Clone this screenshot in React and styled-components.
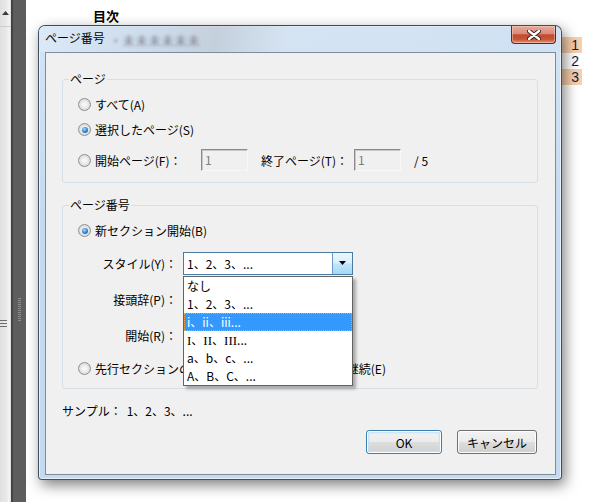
import styled, { createGlobalStyle } from "styled-components";

const GlobalStyle = createGlobalStyle`
  html, body {
    margin: 0;
    padding: 0;
  }
  body {
    width: 593px;
    height: 502px;
    overflow: hidden;
    font-family: "Noto Sans CJK JP", "Noto Sans", sans-serif;
    font-size: 12px;
    color: #000;
  }
`;

const Roman = styled.span`
    font-family: "Liberation Serif", serif;
    font-size: 13px;
`;

const styleOptions = [
    "なし",
    "1、2、3、...",
    "i、ii、iii...",
    <><Roman>I</Roman>、<Roman>II</Roman>、<Roman>III</Roman>...</>,
    "a、b、c、...",
    "A、B、C、...",
];

const Radio = ({ checked, children }) => (
    <RadioRow>
        <RadioDot $checked={checked} />
        <span>{children}</span>
    </RadioRow>
);

const App = () => {
    return (
        <>
            <GlobalStyle />
            <Desktop>
                <Sidebar>
                    <ScrollTrack>
                        <ScrollArrow>
                            <svg width="7" height="4" viewBox="0 0 7 4">
                                <path d="M0 4 L3.5 0 L7 4 Z" fill="#3a3a3a" />
                            </svg>
                        </ScrollArrow>
                        <ScrollThumb>
                            <ThumbGrip />
                        </ScrollThumb>
                    </ScrollTrack>
                    <DarkEdge />
                    <Splitter>
                        <SplitterGrip />
                    </Splitter>
                </Sidebar>

                <Document>
                    <Heading>目次</Heading>
                    <NumberColumn>
                        <NumberCell $marked>1</NumberCell>
                        <NumberCell>2</NumberCell>
                        <NumberCell $marked>3</NumberCell>
                    </NumberColumn>
                </Document>

                <Dialog>
                    <TitleBar>
                        <Title>ページ番号</Title>
                        <Ghost>・未未未未未未</Ghost>
                        <CloseButton>
                            <svg width="14" height="10" viewBox="0 0 14 10">
                                <path d="M2 1 L12 9 M12 1 L2 9" stroke="#3b1a14" strokeWidth="4.2" strokeLinecap="round" />
                                <path d="M2 1 L12 9 M12 1 L2 9" stroke="#ffffff" strokeWidth="2.4" strokeLinecap="round" />
                            </svg>
                        </CloseButton>
                    </TitleBar>

                    <Client>
                        <Group>
                            <Legend>ページ</Legend>
                            <Radio>すべて(A)</Radio>
                            <Radio checked>選択したページ(S)</Radio>
                            <RangeRow>
                                <RadioDot />
                                <RangeLabel $width={106}>開始ページ(F)：</RangeLabel>
                                <DisabledField>1</DisabledField>
                                <RangeLabel $width={93} $gap={13}>終了ページ(T)：</RangeLabel>
                                <DisabledField>1</DisabledField>
                                <PageTotal>/ 5</PageTotal>
                            </RangeRow>
                        </Group>

                        <Group $spaced>
                            <Legend>ページ番号</Legend>
                            <Radio checked>新セクション開始(B)</Radio>
                            <FieldRow $top={8}>
                                <FieldLabel>スタイル(Y)：</FieldLabel>
                                <ComboWrap>
                                    <ComboBox>
                                        <ComboValue>1、2、3、...</ComboValue>
                                        <ComboArrow>
                                            <svg width="7" height="4" viewBox="0 0 7 4">
                                                <path d="M0 0 L7 0 L3.5 4 Z" fill="#000" />
                                            </svg>
                                        </ComboArrow>
                                    </ComboBox>
                                    <OptionList>
                                        {styleOptions.map((opt, i) => (
                                            <OptionItem key={i} $selected={i === 2}>{opt}</OptionItem>
                                        ))}
                                    </OptionList>
                                </ComboWrap>
                            </FieldRow>
                            <FieldRow $top={12}>
                                <FieldLabel>接頭辞(P)：</FieldLabel>
                                <TextField $width={100} />
                            </FieldRow>
                            <FieldRow $top={12}>
                                <FieldLabel>開始(R)：</FieldLabel>
                                <TextField $width={60} />
                            </FieldRow>
                            <FieldRow $top={9}>
                                <Radio>先行セクションの番号付けを選択したページに継続(E)</Radio>
                            </FieldRow>
                        </Group>

                        <SampleRow>
                            <span>サンプル：</span>
                            <SampleValue>1、2、3、...</SampleValue>
                        </SampleRow>

                        <ButtonRow>
                            <Button $default $width={76}>OK</Button>
                            <Button $width={80}>キャンセル</Button>
                        </ButtonRow>
                    </Client>
                </Dialog>
            </Desktop>
        </>
    );
};

const Desktop = styled.div`
    position: relative;
    width: 593px;
    height: 502px;
    display: flex;
    background: #fff;
    overflow: hidden;
`;

const Sidebar = styled.div`
    display: flex;
    width: 26px;
    height: 100%;
    flex: none;
`;

const ScrollTrack = styled.div`
    width: 11px;
    display: flex;
    flex-direction: column;
    background: linear-gradient(90deg, #e0e0e0 0%, #e9e9e9 60%, #f4f4f4 85%, #d6d6d6 100%);
`;

const ScrollArrow = styled.div`
    height: 26px;
    border-bottom: 1px solid #cfcfcf;
    display: flex;
    align-items: center;
    padding-left: 2px;
`;

const ScrollThumb = styled.div`
    flex: 1;
    display: flex;
    flex-direction: column;
`;

const ThumbGrip = styled.div`
    margin-top: 293px;
    width: 7px;
    height: 7px;
    background: repeating-linear-gradient(#6e6e6e 0 1px, transparent 1px 3px);
`;

const DarkEdge = styled.div`
    width: 2px;
    background: #434343;
`;

const Splitter = styled.div`
    width: 13px;
    background: #5d5d5d;
    display: flex;
    justify-content: center;
`;

const SplitterGrip = styled.div`
    margin-top: 298px;
    width: 3px;
    height: 23px;
    background: repeating-linear-gradient(#8d8d8d 0 1px, transparent 1px 2px);
`;

const Document = styled.div`
    flex: 1;
    display: flex;
    justify-content: space-between;
    align-items: flex-start;
`;

const Heading = styled.h1`
    margin: 8px 0 0 67px;
    font-size: 13px;
    line-height: 15px;
    font-weight: 700;
`;

const NumberColumn = styled.div`
    margin: 37px 11px 0 0;
    width: 21px;
    display: flex;
    flex-direction: column;
`;

const NumberCell = styled.div`
    height: 16px;
    line-height: 16px;
    text-align: right;
    padding-right: 3px;
    font-family: "Liberation Sans", sans-serif;
    font-size: 14px;
    color: #0d1b4c;
    background: ${p => (p.$marked ? "#f7cfab" : "transparent")};
`;

const Dialog = styled.div`
    position: absolute;
    left: 38px;
    top: 25px;
    width: 524px;
    height: 455px;
    box-sizing: border-box;
    display: flex;
    flex-direction: column;
    border: 1px solid rgba(38, 52, 70, 0.85);
    border-radius: 7px 7px 4px 4px;
    background: linear-gradient(180deg, #d3e4f5 0%, #c6dbf0 40%, #c4daf1 100%);
    box-shadow: 3px 5px 14px rgba(0, 0, 0, 0.5), inset 0 0 0 1px rgba(255, 255, 255, 0.6);
`;

const TitleBar = styled.div`
    height: 26px;
    display: flex;
    align-items: flex-start;
    padding-left: 6px;
    border-radius: 6px 6px 0 0;
    background: linear-gradient(100deg, rgba(220, 234, 248, 0.9) 0%, rgba(200, 214, 230, 0.6) 22%,
        rgba(186, 192, 200, 0.55) 34%, rgba(214, 228, 243, 0.7) 48%, rgba(205, 223, 242, 0.5) 100%);
`;

const Title = styled.span`
    margin-top: 4px;
    line-height: 16px;
    font-size: 12px;
`;

const Ghost = styled.span`
    margin: 8px 0 0 5px;
    line-height: 14px;
    font-size: 12px;
    letter-spacing: 1px;
    color: #7d7d85;
    filter: blur(1.4px);
`;

const CloseButton = styled.div`
    margin-left: auto;
    margin-right: 5px;
    width: 45px;
    height: 18px;
    box-sizing: border-box;
    display: flex;
    align-items: center;
    justify-content: center;
    border: 1px solid #5c2b22;
    border-top: none;
    border-radius: 0 0 4px 4px;
    background: linear-gradient(180deg, #e8aa9c 0%, #d88b7a 45%, #c24a30 52%, #c85537 78%, #e09475 100%);
    box-shadow: inset 0 0 0 1px rgba(255, 220, 210, 0.45);
`;

const Client = styled.div`
    flex: 1;
    margin: 0 5px 4px 6px;
    border: 1px solid #7d8c9b;
    background: #f0f0f0;
    padding: 19px 17px 0 16px;
    display: flex;
    flex-direction: column;
`;

const Group = styled.fieldset`
    margin: ${p => (p.$spaced ? "15px" : "0")} 0 0;
    padding: 6px 15px 8px;
    min-width: 0;
    border: 1px solid #d5dfe5;
    border-radius: 3px;
`;

const Legend = styled.legend`
    margin-left: -9px;
    padding: 0 1px;
    font-size: 12px;
    line-height: 14px;
`;

const RadioRow = styled.label`
    display: flex;
    align-items: center;
    gap: 4px;
    height: 25px;
    white-space: nowrap;
`;

const RadioDot = styled.span`
    position: relative;
    flex: none;
    width: 13px;
    height: 13px;
    box-sizing: border-box;
    border-radius: 50%;
    border: 1px solid #8f9090;
    background: radial-gradient(circle at 50% 50%, #fbfbfb 0, #f1f1f1 2.5px, #d6d6d6 6px);

    &::after {
        content: "";
        position: absolute;
        inset: 2.5px;
        border-radius: 50%;
        display: ${p => (p.$checked ? "block" : "none")};
        background: radial-gradient(circle at 40% 35%, #a6dcff 0, #2f80d2 55%, #144a86 100%);
    }
`;

const RangeRow = styled.div`
    display: flex;
    align-items: center;
    margin-top: 4px;
    height: 28px;
    white-space: nowrap;
`;

const RangeLabel = styled.span`
    width: ${p => p.$width}px;
    margin-left: ${p => p.$gap || 4}px;
    flex: none;
`;

const DisabledField = styled.div`
    width: 47px;
    height: 22px;
    box-sizing: border-box;
    flex: none;
    border: 1px solid;
    border-color: #8a8a8a #f8f8f8 #f8f8f8 #8a8a8a;
    box-shadow: inset 1px 1px 0 #c8c8c8;
    background: #f0f0f0;
    color: #7b7b7b;
    padding-left: 3px;
    line-height: 19px;
`;

const PageTotal = styled.span`
    margin-left: 13px;
`;

const FieldRow = styled.div`
    display: flex;
    align-items: center;
    height: 24px;
    margin-top: ${p => p.$top}px;
`;

const FieldLabel = styled.span`
    width: 99px;
    margin-right: 6px;
    text-align: right;
    flex: none;
`;

const ComboWrap = styled.div`
    position: relative;
    width: 170px;
    height: 23px;
`;

const ComboBox = styled.div`
    width: 100%;
    height: 100%;
    box-sizing: border-box;
    display: flex;
    align-items: center;
    border: 1px solid #4b7aa3;
    background: #fff;
`;

const ComboValue = styled.span`
    flex: 1;
    padding-left: 3px;
`;

const ComboArrow = styled.span`
    width: 19px;
    height: 100%;
    display: flex;
    align-items: center;
    justify-content: center;
    border-left: 1px solid #6e9ac0;
    background: linear-gradient(180deg, #eaf6fd 0%, #d9f0fc 48%, #bee6fd 52%, #a7d9f5 100%);
`;

const OptionList = styled.ul`
    position: absolute;
    top: 100%;
    left: 0;
    z-index: 5;
    width: 170px;
    margin: 1px 0 0;
    padding: 0;
    list-style: none;
    box-sizing: border-box;
    border: 1px solid #646464;
    background: #fff;
    box-shadow: 3px 3px 3px rgba(0, 0, 0, 0.3);
`;

const OptionItem = styled.li`
    height: 18px;
    box-sizing: border-box;
    line-height: 16px;
    padding-left: 2px;
    border: 1px ${p => (p.$selected ? "dotted #f0a24a" : "solid transparent")};
    background: ${p => (p.$selected ? "#3399ff" : "transparent")};
    color: ${p => (p.$selected ? "#fff" : "#000")};
    white-space: nowrap;
`;

const TextField = styled.div`
    width: ${p => p.$width}px;
    height: 22px;
    box-sizing: border-box;
    border: 1px solid #abadb3;
    background: #fff;
`;

const SampleRow = styled.div`
    display: flex;
    margin-top: 15px;
    line-height: 14px;
`;

const SampleValue = styled.span`
    margin-left: 5px;
`;

const ButtonRow = styled.div`
    display: flex;
    justify-content: flex-end;
    gap: 15px;
    margin-top: 12px;
    padding-right: 1px;
`;

const Button = styled.button`
    width: ${p => p.$width}px;
    height: 24px;
    padding: 0;
    font-family: inherit;
    font-size: 12px;
    color: #000;
    border: 1px solid ${p => (p.$default ? "#3c7fb1" : "#707070")};
    border-radius: 3px;
    background: linear-gradient(180deg, #f2f2f2 0%, #ebebeb 48%, #dddddd 52%, #cfcfcf 100%);
    box-shadow: ${p => (p.$default
        ? "inset 0 0 0 1px #fff, inset 0 0 2px 2px #bfe2f6"
        : "inset 0 0 0 1px #fcfcfc")};
`;

export default App;
